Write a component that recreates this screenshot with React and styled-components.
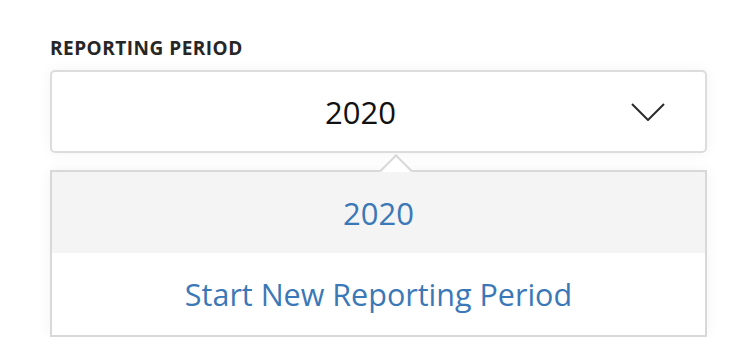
import React from "react";
import styled, { createGlobalStyle } from "styled-components";

const Global = createGlobalStyle`
  html, body { margin: 0; padding: 0; background: #fff; }
  body { font-family: "Open Sans", "Liberation Sans", sans-serif; }
`;

const Page = styled.div`
  padding: 36px 39px 0 50px;
`;

const Label = styled.div`
  font-size: 19px;
  line-height: 24px;
  font-weight: 700;
  letter-spacing: 0.5px;
  color: #262626;
  text-transform: uppercase;
  margin-bottom: 10px;
`;

const Select = styled.div`
  display: grid;
  grid-template-columns: 1fr auto;
  align-items: center;
  height: 83px;
  box-sizing: border-box;
  border: 2px solid #dcdcdc;
  border-radius: 5px;
  background: #fff;
  box-shadow: 0 0 14px rgba(0, 0, 0, 0.05);
  padding: 0 40px 0 38px;
`;

const Value = styled.span`
  text-align: center;
  font-size: 31px;
  color: #111;
`;

const Chevron = styled.svg`
  display: block;
  width: 34px;
  height: 18px;
`;

const Menu = styled.div`
  position: relative;
  margin-top: 17px;
  border: 2px solid #d8d8d8;
  background: #fff;
  box-shadow: 0 0 14px rgba(0, 0, 0, 0.05);
`;

const Arrow = styled.div`
  position: absolute;
  z-index: 1;
  top: -13px;
  left: 332px;
  width: 24px;
  height: 24px;
  box-sizing: border-box;
  background: #fff;
  border-top: 2px solid #d8d8d8;
  border-left: 2px solid #d8d8d8;
  transform: rotate(45deg);
`;

const Item = styled.div`
  position: relative;
  z-index: 2;
  height: ${(p) => p.$h}px;
  display: flex;
  align-items: center;
  justify-content: center;
  font-size: ${(p) => p.$size}px;
  color: #3b78b7;
  background: ${(p) => (p.$active ? "#f4f4f4" : "#fff")};
`;

export default function App() {
  return (
    <>
      <Global />
      <Page>
        <Label>Reporting Period</Label>
        <Select>
          <Value>2020</Value>
          <Chevron viewBox="0 0 34 18" fill="none">
            <polyline points="1,1 17,17 33,1" stroke="#2b2b2b" strokeWidth="2" />
          </Chevron>
        </Select>
        <Menu>
          <Arrow />
          <Item $active $h={81} $size={31}>2020</Item>
          <Item $h={82} $size={30.5}>Start New Reporting Period</Item>
        </Menu>
      </Page>
    </>
  );
}
